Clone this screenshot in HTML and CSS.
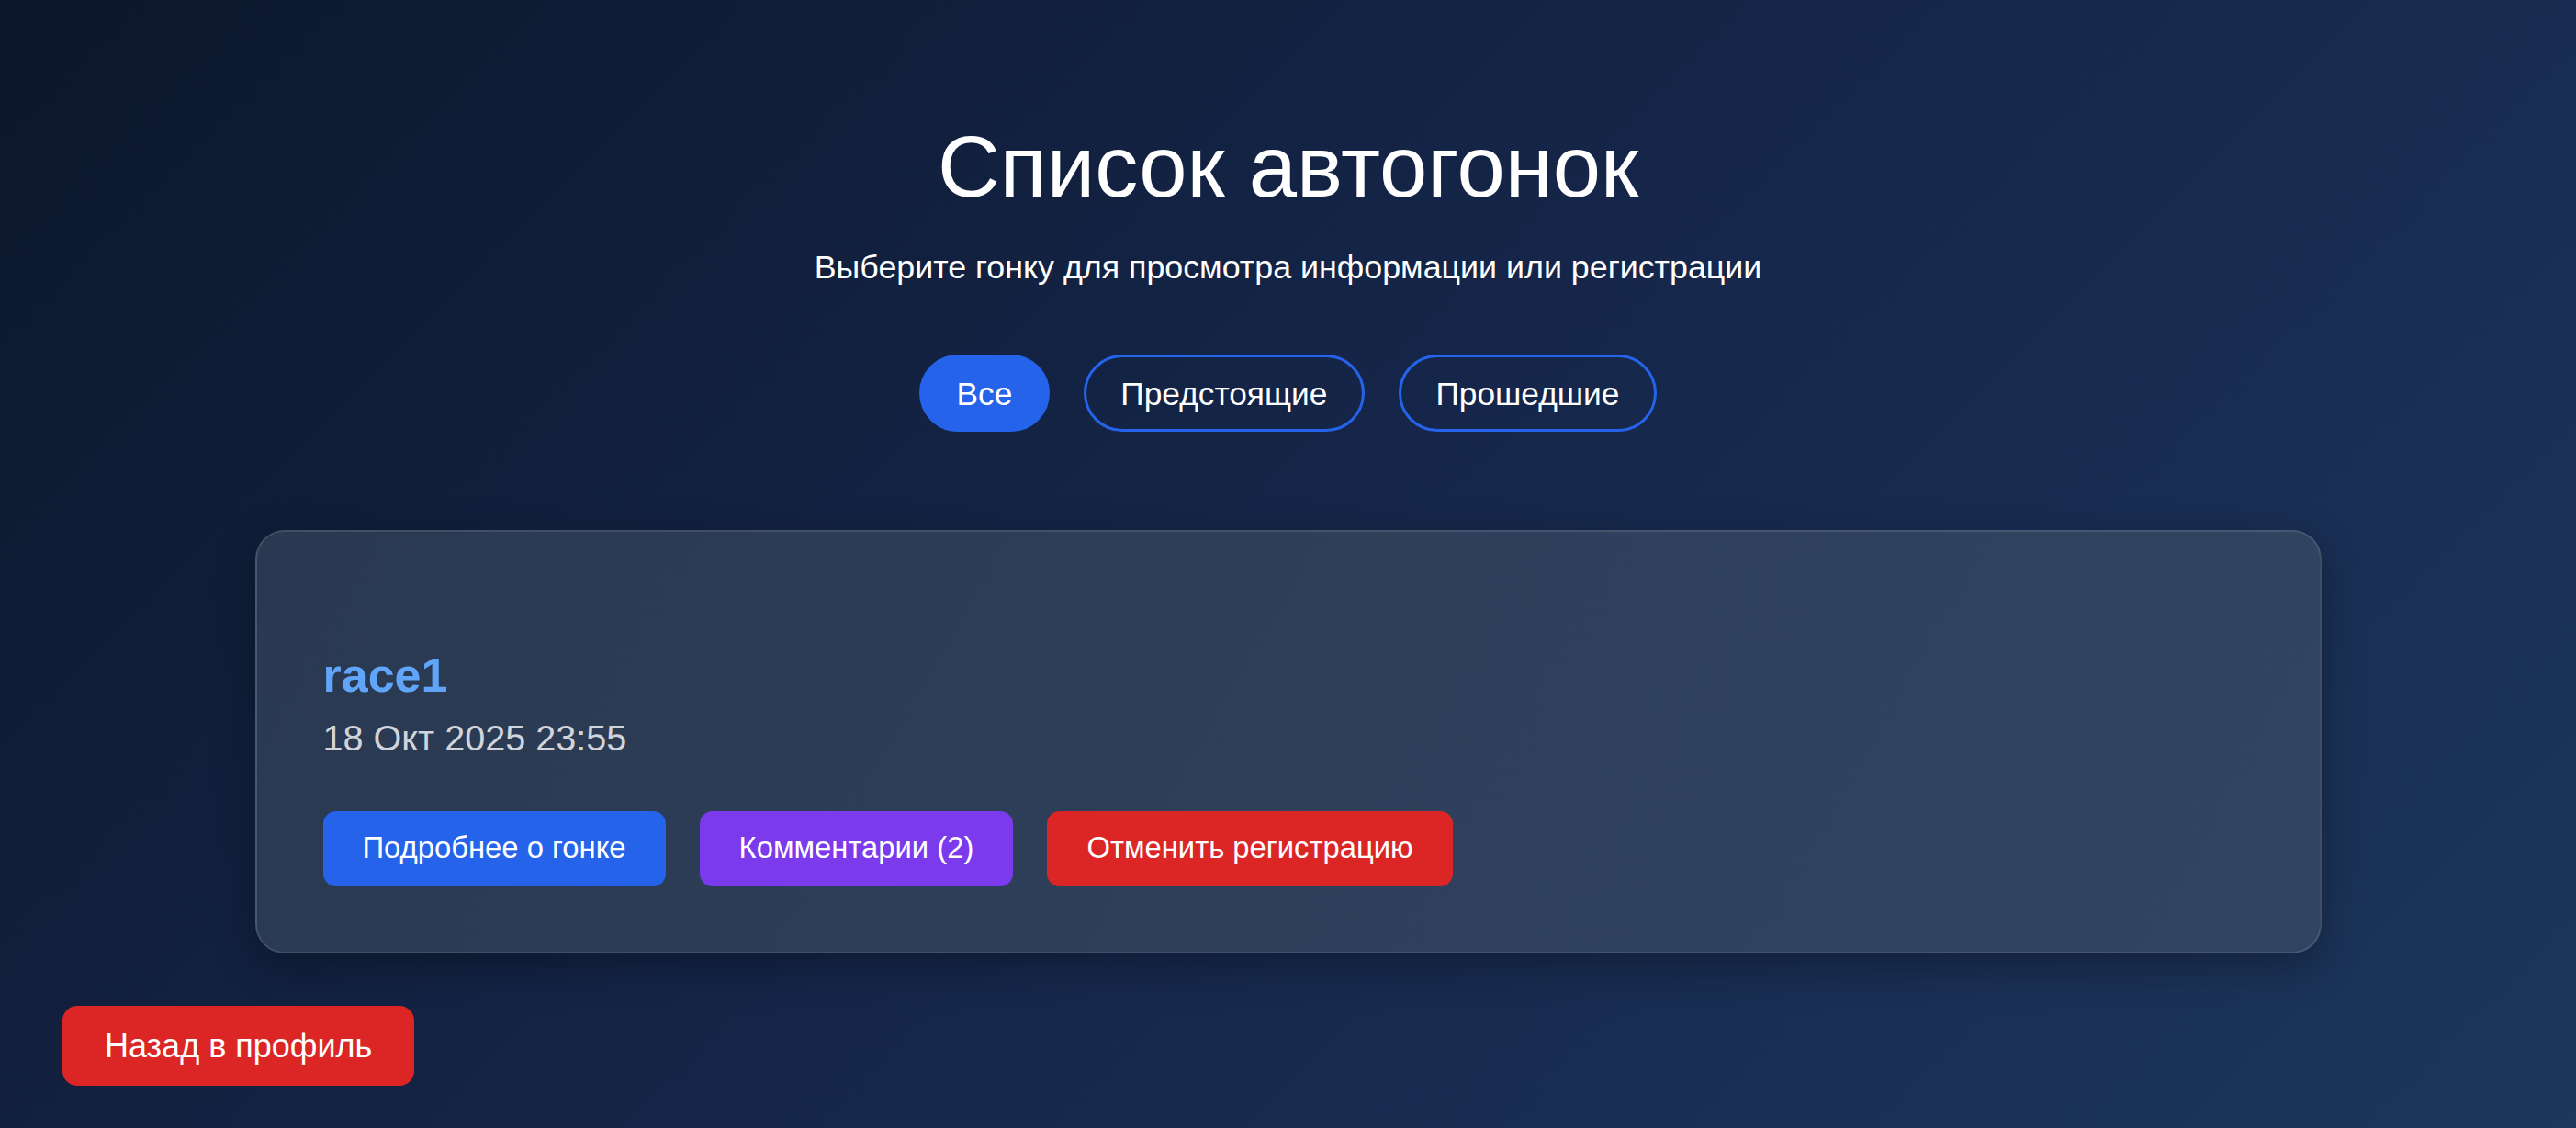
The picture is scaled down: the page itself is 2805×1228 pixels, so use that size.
FILE: index.html
```html
<!DOCTYPE html>
<html lang="ru">
<head>
<meta charset="utf-8">
<title>Список автогонок</title>
<link rel="stylesheet" href="styles.css">
</head>
<body>
<main class="page">
  <header class="head">
    <h1 class="title">Список автогонок</h1>
    <p class="subtitle">Выберите гонку для просмотра информации или регистрации</p>
    <nav class="filters">
      <button class="filter active">Все</button>
      <button class="filter">Предстоящие</button>
      <button class="filter">Прошедшие</button>
    </nav>
  </header>
  <section class="list">
    <article class="card">
      <h2 class="race-name">race1</h2>
      <div class="race-date">18 Окт 2025 23:55</div>
      <div class="actions">
        <button class="btn btn-blue">Подробнее о гонке</button>
        <button class="btn btn-purple">Комментарии (2)</button>
        <button class="btn btn-red">Отменить регистрацию</button>
      </div>
    </article>
  </section>
</main>
<button class="back">Назад в профиль</button>
</body>
</html>
```

FILE: styles.css
```css
* { box-sizing: border-box; }
html, body { margin: 0; padding: 0; height: 100%; }
body {
  font-family: "Liberation Sans", Arial, sans-serif;
  color: #fff;
  background: linear-gradient(135deg, #0c172b 0%, #15264a 50%, #1d365c 100%);
  min-height: 100vh;
  overflow: hidden;
}
.page {
  display: flex;
  flex-direction: column;
  align-items: center;
  padding-top: 128px;
}
.head {
  display: flex;
  flex-direction: column;
  align-items: center;
}
.title {
  margin: 0;
  font-size: 94px;
  font-weight: 400;
  line-height: 1.15;
}
.subtitle {
  margin: 35px 0 0;
  font-size: 35.8px;
  line-height: 1.15;
}
.filters {
  display: flex;
  gap: 37px;
  margin-top: 74px;
}
.filter {
  font-family: inherit;
  font-size: 35.3px;
  color: #fff;
  background: transparent;
  border: 3.5px solid #2563eb;
  border-radius: 50px;
  padding: 0 37.5px;
  line-height: 1;
  height: 84px;
}
.filter.active { background: #2563eb; }
.list {
  width: 2250px;
  margin-top: 107px;
}
.card {
  border-radius: 32px;
  border: 2px solid rgba(255, 255, 255, 0.1);
  background: linear-gradient(120deg, #2a3951 0%, #314562 100%);
  box-shadow: 0 14px 45px rgba(0, 0, 0, 0.3);
  padding: 127px 72px 71px;
  display: flex;
  flex-direction: column;
  align-items: flex-start;
}
.race-name {
  margin: 0;
  font-size: 52px;
  font-weight: 700;
  color: #60a5fa;
  line-height: 1.15;
}
.race-date {
  margin-top: 15px;
  font-size: 39.6px;
  color: #d1d5db;
  line-height: 1.15;
}
.actions {
  display: flex;
  gap: 37px;
  margin-top: 56px;
}
.btn {
  font-family: inherit;
  font-size: 32.8px;
  color: #fff;
  border: none;
  border-radius: 14px;
  height: 82px;
  padding: 0 43px;
  line-height: 1;
}
.btn-blue { background: #2563eb; }
.btn-purple { background: #7c3aed; }
.btn-red { background: #dc2626; }
.back {
  position: fixed;
  left: 68px;
  bottom: 46px;
  height: 87px;
  padding: 0 46px;
  font-family: inherit;
  font-size: 36px;
  color: #fff;
  background: #dc2626;
  border: none;
  border-radius: 16px;
}
```
